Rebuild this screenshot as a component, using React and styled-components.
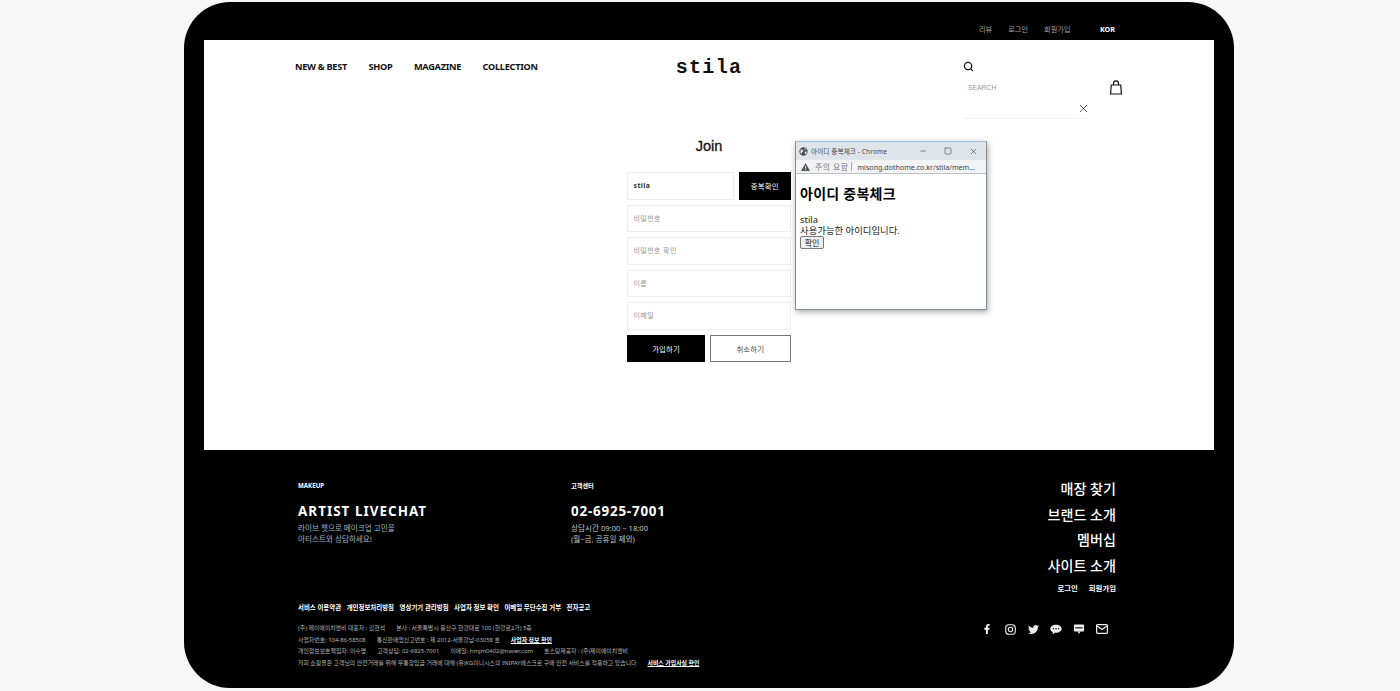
import React from 'react';
import styled, { createGlobalStyle } from 'styled-components';
import { Search, X, Minus, Square } from 'lucide-react';
import { FaFacebookF, FaTwitter } from 'react-icons/fa';

const KR = `"Noto Sans", "Noto Sans CJK KR", sans-serif`;

const GlobalStyle = createGlobalStyle`
  html, body {
    margin: 0;
    height: 691px;
    overflow: hidden;
    background: #f7f7f7;
  }
  * { box-sizing: border-box; }
`;

const Frame = styled.div`
  width: 1050px;
  height: 686px;
  margin: 2px 0 0 184px;
  padding: 0 20px;
  background: #000;
  border-radius: 46px;
  font-family: ${KR};
  overflow: hidden;
`;

const TopBar = styled.div`
  height: 38px;
  display: flex;
  justify-content: flex-end;
  align-items: center;
  padding: 16px 99px 0 0;
`;

const TopLink = styled.a`
  font-size: 7.2px;
  line-height: 12px;
  color: #a0a0a0;
  margin-left: 16px;
`;

const Lang = styled.a`
  font-size: 7.2px;
  line-height: 12px;
  font-weight: 700;
  color: #fff;
  margin-left: 29.5px;
`;

const Main = styled.main`
  position: relative;
  height: 410px;
  background: #fff;
`;

const Header = styled.header`
  height: 90px;
  padding: 15px 91px 0;
  display: grid;
  grid-template-columns: 1fr auto 1fr;
  align-items: start;
`;

const Nav = styled.nav`
  display: flex;
  gap: 21.5px;
  margin-top: 5px;
`;

const NavLink = styled.a`
  font-size: 9.2px;
  line-height: 14px;
  font-weight: 700;
  letter-spacing: -0.28px;
  color: #111;
`;

const Logo = styled.div`
  margin-top: 2px;
  font-family: "Liberation Mono", monospace;
  font-size: 20px;
  font-weight: 700;
  line-height: 22px;
  letter-spacing: 1.3px;
  color: #111;
`;

const SearchBox = styled.div`
  justify-self: end;
  width: 160px;
  margin-top: 6px;
  display: flex;
  flex-direction: column;
  color: #111;
`;

const SearchRow = styled.div`
  display: flex;
  justify-content: space-between;
  align-items: center;
  height: 15px;
  margin-top: 8px;
  padding: 0 1px 0 5px;
  font-size: 6.8px;
  font-family: "Liberation Sans", sans-serif;
  color: #999;
`;

const SearchField = styled.div`
  display: flex;
  justify-content: flex-end;
  align-items: center;
  width: 125px;
  height: 19px;
  margin-top: 5px;
  border-bottom: 1px solid #f0f0f0;
`;

const CloseWrap = styled.span`
  display: flex;
  margin: 0 -2px 1px 0;
`;

const Title = styled.h1`
  margin: 6px 0 16px;
  text-align: center;
  font-family: "Liberation Sans", sans-serif;
  font-size: 14.5px;
  line-height: 20px;
  font-weight: 400;
  color: #111;
  -webkit-text-stroke: 0.3px #111;
`;

const JoinForm = styled.form`
  width: 163.5px;
  margin: 0 0 0 423px;
  display: flex;
  flex-direction: column;
  gap: 5px;
`;

const FormRow = styled.div`
  display: flex;
  gap: 5px;
`;

const Field = styled.div`
  flex: 1 0 auto;
  height: 27.5px;
  display: flex;
  align-items: center;
  padding: ${p => (p.$filled ? '0 0 0 5.5px' : '0 0 1px 5.5px')};
  border: 1px solid #eee;
  font-size: 7px;
  color: ${p => (p.$filled ? '#333' : '#999')};
  font-weight: ${p => (p.$filled ? 700 : 400)};
  letter-spacing: 0.4px;
`;

const Btn = styled.button`
  flex: ${p => (p.$small ? '0 0 51.5px' : 1)};
  height: 27.5px;
  padding: 0;
  background: ${p => (p.$outline ? '#fff' : '#000')};
  color: ${p => (p.$outline ? '#444' : '#fff')};
  border: ${p => (p.$outline ? '1.5px solid #777' : 'none')};
  font-family: ${KR};
  font-size: 7.4px;
  letter-spacing: 0.2px;
`;

const Popup = styled.div`
  position: absolute;
  left: 591px;
  top: 101px;
  width: 192px;
  height: 169px;
  background: #fff;
  border: 1px solid #8a8f94;
  border-top: 1px solid #9dc3e2;
  box-shadow: 1px 2px 6px rgba(0, 0, 0, 0.35);
  display: flex;
  flex-direction: column;
`;

const WinBar = styled.div`
  height: 18px;
  flex: none;
  display: flex;
  align-items: center;
  padding: 0 8px 0 3px;
  background: #dfe4ea;
  font-size: 6.6px;
  color: #444;
`;

const WinTitle = styled.span`
  flex: 1;
  margin-left: 3px;
  letter-spacing: 0.1px;
`;

const WinButtons = styled.span`
  display: flex;
  align-items: center;
  gap: 17px;
  color: #222;
`;

const AddressBar = styled.div`
  height: 14px;
  flex: none;
  display: flex;
  align-items: center;
  padding: 0 3px 0 5px;
  background: #f1f3f4;
  border-bottom: 1px solid #bcc0c4;
  font-size: 7.8px;
  color: #777;
  white-space: nowrap;
  overflow: hidden;
  svg { flex: none; }
`;

const Warn = styled.span`
  margin: 0 3px 0 5px;
  letter-spacing: 0.55px;
  color: #777;
`;

const Sep = styled.span`
  flex: none;
  width: 1px;
  height: 9px;
  background: #aaa;
  margin-right: 5px;
`;

const Host = styled.span`
  font-size: 7.1px;
  color: #444;
`;

const PopBody = styled.div`
  padding: 10px 4px;
  font-size: 9.4px;
  line-height: 11px;
  color: #222;
`;

const PopTitle = styled.h2`
  margin: 0 0 11px;
  font-size: 14px;
  line-height: 19px;
  font-weight: 700;
  letter-spacing: 0.25px;
  color: #000;
`;

const PopBtn = styled.button`
  display: block;
  width: 24px;
  height: 13px;
  padding: 0;
  font-family: ${KR};
  font-size: 8px;
  line-height: 11px;
  color: #222;
  background: #efefef;
  border: 1px solid #767676;
  border-radius: 2px;
`;

const Footer = styled.footer`
  padding: 26px 98px 0 94px;
  color: #fff;
`;

const FooterTop = styled.div`
  display: flex;
  height: 119px;
`;

const InfoCol = styled.div`
  width: 273px;
  padding-top: 5px;
`;

const InfoLabel = styled.div`
  font-size: 6.2px;
  line-height: 10px;
  font-weight: 700;
  margin-bottom: 10px;
`;

const InfoTitle = styled.div`
  font-size: 13.4px;
  line-height: 20px;
  font-weight: 700;
  letter-spacing: ${p => (p.$tight ? '0.8px' : '1.05px')};
  margin-bottom: 2px;
`;

const InfoText = styled.div`
  font-size: 7.6px;
  line-height: 11px;
  color: ${p => (p.$blue ? '#9db4c8' : '#c4c4c4')};
`;

const SideMenu = styled.div`
  margin-left: auto;
  text-align: right;
`;

const SideLink = styled.div`
  font-size: 14.1px;
  line-height: 25.6px;
  font-weight: 500;
  color: #fff;
`;

const SideSmall = styled.div`
  display: flex;
  justify-content: flex-end;
  gap: 11px;
  margin-top: 5px;
  font-size: 7.4px;
  line-height: 10px;
  font-weight: 700;
`;

const FooterBottom = styled.div`
  display: flex;
  justify-content: space-between;
  margin-top: 8px;
`;

const Policies = styled.div`
  display: flex;
  gap: 5.5px;
  margin-bottom: 10px;
  font-size: 6.45px;
  line-height: 10px;
  font-weight: 700;
`;

const Legal = styled.div`
  display: flex;
  gap: 11px;
  font-size: 5.9px;
  line-height: 11.7px;
  color: #b5b5b5;
`;

const LegalLink = styled.a`
  color: #fff;
  font-weight: 700;
  text-decoration: underline;
`;

const Social = styled.div`
  display: flex;
  align-items: center;
  gap: 11px;
  height: 14px;
  margin: 19px 8px 0 0;
  color: #eee;
`;

const SocialIcon = styled.span`
  width: 12px;
  height: 12px;
  display: flex;
  align-items: center;
  justify-content: center;
`;

const BagIcon = () => (
  <svg width="12" height="15" viewBox="0 0 12 15" fill="none" stroke="#111" strokeWidth="1.2">
    <path d="M1.2 5h9.6l.6 9H.6z" />
    <path d="M3.5 5V3.4a2.5 2.5 0 0 1 5 0V5" />
  </svg>
);

const GlobeIcon = () => (
  <svg width="9" height="9" viewBox="0 0 10 10">
    <circle cx="5" cy="5" r="4.6" fill="#4a4f55" />
    <path d="M2 2.500l2 .6.8 1.600-1.400 1-.3 2L1.400 6zM6 1.200l2 1.400-1.600 1zM6.400 5.400l2.400-.4-.8 2.600-1.400.8z" fill="#dfe4ea" />
  </svg>
);

const WarnIcon = () => (
  <svg width="9" height="8" viewBox="0 0 9 8">
    <path d="M4.500 0 9 8H0z" fill="#555" />
    <path d="M4.100 3h.8v2.400h-.8zM4.100 6h.8v.9h-.8z" fill="#f1f3f4" />
  </svg>
);

const InstaIcon = () => (
  <svg width="11" height="11" viewBox="0 0 12 12" fill="none" stroke="currentColor">
    <rect x=".8" y=".8" width="10.400" height="10.400" rx="3.400" strokeWidth="1.200" />
    <circle cx="6" cy="6" r="2.400" strokeWidth="1.200" />
    <circle cx="9" cy="3" r=".6" fill="currentColor" stroke="none" />
  </svg>
);

const TalkIcon = () => (
  <svg width="12" height="11" viewBox="0 0 12 11">
    <path d="M6 .8C2.800.8.300 2.500.300 4.800c0 1.500 1 2.700 2.600 3.400L2.400 10.400l2.500-1.700c.4 0 .7.100 1.100.100 3.200 0 5.700-1.800 5.700-4S9.200.8 6 .8z" fill="currentColor" />
    <circle cx="3.500" cy="4.800" r=".7" fill="#000" />
    <circle cx="6" cy="4.800" r=".7" fill="#000" />
    <circle cx="8.500" cy="4.800" r=".7" fill="#000" />
  </svg>
);

const PostIcon = () => (
  <svg width="12" height="12" viewBox="0 0 12 12" fill="currentColor">
    <rect x="1" y="1.500" width="10" height="7" rx=".8" />
    <rect x="2.400" y="4.300" width="7.200" height="1.100" fill="#000" />
    <path d="M4.600 8.500h2.800L6 11z" />
  </svg>
);

const MailIcon = () => (
  <svg width="12" height="10" viewBox="0 0 12 10" fill="none" stroke="currentColor" strokeWidth="1.200">
    <rect x=".6" y=".6" width="10.800" height="8.800" rx="1" />
    <path d="M1 2l5 3.400L11 2" />
  </svg>
);

const navItems = ['NEW & BEST', 'SHOP', 'MAGAZINE', 'COLLECTION'];
const placeholders = ['비밀번호', '비밀번호 확인', '이름', '이메일'];
const policies = ['서비스 이용약관', '개인정보처리방침', '영상기기 관리방침', '사업자 정보 확인', '이메일 무단수집 거부', '전자공고'];
const sideLinks = ['매장 찾기', '브랜드 소개', '멤버십', '사이트 소개'];

const App = () => (
  <>
    <GlobalStyle />
    <Frame>
      <TopBar>
        <TopLink>리뷰</TopLink>
        <TopLink>로그인</TopLink>
        <TopLink>회원가입</TopLink>
        <Lang>KOR</Lang>
      </TopBar>

      <Main>
        <Header>
          <Nav>
            {navItems.map(item => <NavLink key={item}>{item}</NavLink>)}
          </Nav>
          <Logo>stila</Logo>
          <SearchBox>
            <Search size={11} strokeWidth={2.6} />
            <SearchRow>
              SEARCH
              <BagIcon />
            </SearchRow>
            <SearchField>
              <CloseWrap><X size={13} strokeWidth={1.3} /></CloseWrap>
            </SearchField>
          </SearchBox>
        </Header>

        <Title>Join</Title>
        <JoinForm>
          <FormRow>
            <Field $filled>stila</Field>
            <Btn type="button" $small>중복확인</Btn>
          </FormRow>
          {placeholders.map(text => <Field key={text}>{text}</Field>)}
          <FormRow>
            <Btn type="button">가입하기</Btn>
            <Btn type="button" $outline>취소하기</Btn>
          </FormRow>
        </JoinForm>

        <Popup>
          <WinBar>
            <GlobeIcon />
            <WinTitle>아이디 중복체크 - Chrome</WinTitle>
            <WinButtons>
              <Minus size={8} strokeWidth={1.4} />
              <Square size={8} strokeWidth={1.4} />
              <X size={9} strokeWidth={1.4} />
            </WinButtons>
          </WinBar>
          <AddressBar>
            <WarnIcon />
            <Warn>주의 요함</Warn>
            <Sep />
            <Host>misong.dothome.co.kr/stila/mem...</Host>
          </AddressBar>
          <PopBody>
            <PopTitle>아이디 중복체크</PopTitle>
            stila<br />
            사용가능한 아이디입니다.
            <PopBtn type="button">확인</PopBtn>
          </PopBody>
        </Popup>
      </Main>

      <Footer>
        <FooterTop>
          <InfoCol>
            <InfoLabel>MAKEUP</InfoLabel>
            <InfoTitle>ARTIST LIVECHAT</InfoTitle>
            <InfoText $blue>라이브 챗으로 메이크업 고민을</InfoText>
            <InfoText $blue>아티스트와 상담하세요!</InfoText>
          </InfoCol>
          <InfoCol>
            <InfoLabel>고객센터</InfoLabel>
            <InfoTitle $tight>02-6925-7001</InfoTitle>
            <InfoText>상담시간 09:00 ~ 18:00</InfoText>
            <InfoText>(월~금, 공휴일 제외)</InfoText>
          </InfoCol>
          <SideMenu>
            {sideLinks.map(text => <SideLink key={text}>{text}</SideLink>)}
            <SideSmall>
              <span>로그인</span>
              <span>회원가입</span>
            </SideSmall>
          </SideMenu>
        </FooterTop>

        <FooterBottom>
          <div>
            <Policies>
              {policies.map(text => <span key={text}>{text}</span>)}
            </Policies>
            <Legal>
              <span>(주) 제이에이치엔비 대표자 : 김현석</span>
              <span>본사 : 서울특별시 용산구 한강대로 100 (한강로2가) 5층</span>
            </Legal>
            <Legal>
              <span>사업자번호: 104-86-58508</span>
              <span>통신판매업신고번호 : 제 2012-서울강남-03058 호</span>
              <LegalLink>사업자 정보 확인</LegalLink>
            </Legal>
            <Legal>
              <span>개인정보보호책임자: 이수명</span>
              <span>고객상담: 02-6925-7001</span>
              <span>이메일: hmjm0402@naver.com</span>
              <span>호스팅제공자 : (주)제이에이치엔비</span>
            </Legal>
            <Legal>
              <span>저희 쇼핑몰은 고객님의 안전거래를 위해 무통장입금 거래에 대해 (유)KG이니시스의 INIPAY에스크로 구매 안전 서비스를 적용하고 있습니다</span>
              <LegalLink>서비스 가입사실 확인</LegalLink>
            </Legal>
          </div>
          <Social>
            <SocialIcon><FaFacebookF size={10} /></SocialIcon>
            <SocialIcon><InstaIcon /></SocialIcon>
            <SocialIcon><FaTwitter size={11} /></SocialIcon>
            <SocialIcon><TalkIcon /></SocialIcon>
            <SocialIcon><PostIcon /></SocialIcon>
            <SocialIcon><MailIcon /></SocialIcon>
          </Social>
        </FooterBottom>
      </Footer>
    </Frame>
  </>
);

export default App;
